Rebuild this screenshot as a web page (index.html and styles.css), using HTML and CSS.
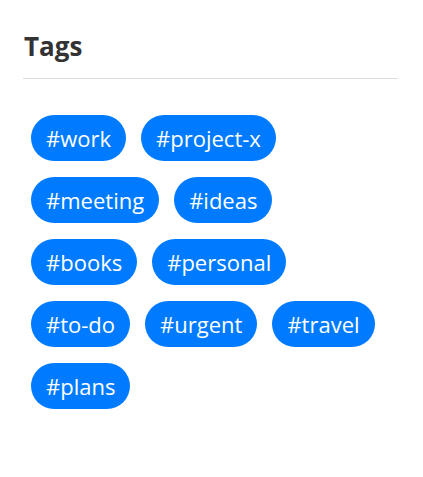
FILE: index.html
```html
<!DOCTYPE html>
<html lang="en">
<head>
<meta charset="utf-8">
<title>Tags</title>
<link rel="stylesheet" href="styles.css">
</head>
<body>
<section class="panel">
  <h2 class="panel-title">Tags</h2>
  <ul class="tag-list">
    <li class="tag">#work</li>
    <li class="tag">#project-x</li>
    <li class="tag">#meeting</li>
    <li class="tag">#ideas</li>
    <li class="tag">#books</li>
    <li class="tag">#personal</li>
    <li class="tag">#to-do</li>
    <li class="tag">#urgent</li>
    <li class="tag">#travel</li>
    <li class="tag">#plans</li>
  </ul>
</section>
</body>
</html>
```

FILE: styles.css
```css
html, body {
  margin: 0;
  padding: 0;
  background: #fff;
}

body {
  font-family: "Open Sans", "Noto Sans", "Liberation Sans", sans-serif;
  color: #333;
}

.panel {
  padding: 29px 25px 20px 23px;
}

.panel-title {
  margin: 0;
  padding: 0 0 15px 1px;
  font-size: 26px;
  line-height: 34px;
  font-weight: 700;
  color: #333;
  border-bottom: 1px solid #dedede;
}

.tag-list {
  list-style: none;
  margin: 0;
  padding: 36px 8px 0 8px;
  display: flex;
  flex-wrap: wrap;
  gap: 16px 15px;
}

.tag {
  background: #007bff;
  color: #fff;
  font-size: 22px;
  line-height: 30px;
  padding: 8px 15px;
  border-radius: 23px;
}
```
